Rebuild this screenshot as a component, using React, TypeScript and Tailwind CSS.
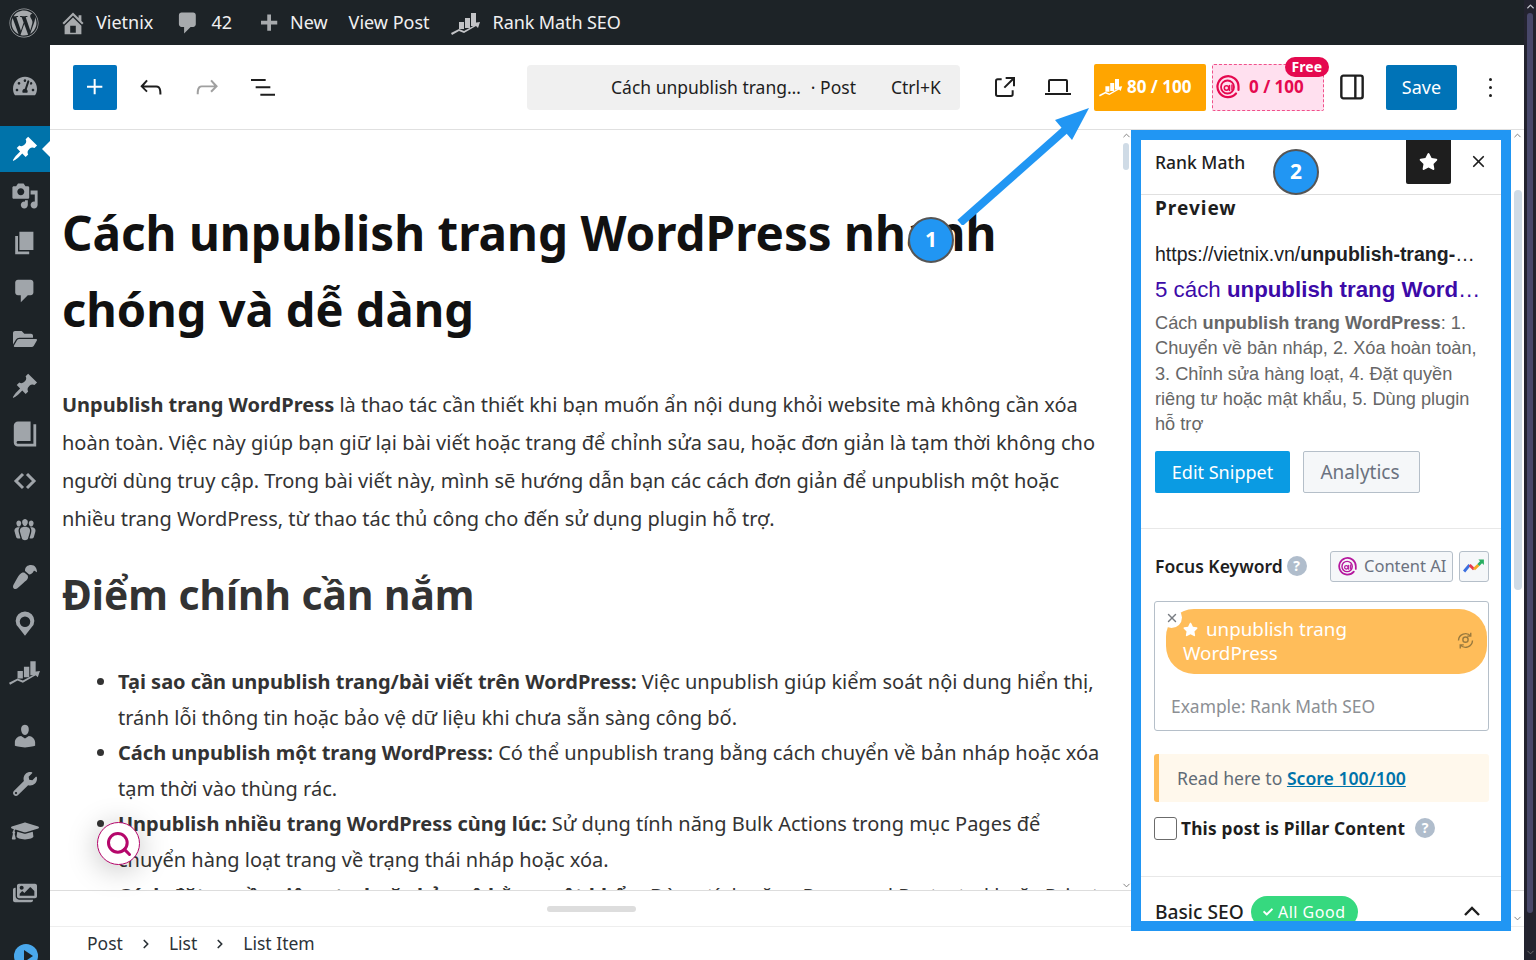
import React from 'react';
import { FaWordpress, FaTachometerAlt, FaFolderOpen, FaPaintBrush, FaWrench, FaGraduationCap, FaImages, FaStar, FaCheck } from 'react-icons/fa';
import { X, ChevronRight, ChevronUp, ChevronDown, Search } from 'lucide-react';

const Dash = ({ d, className = 'w-6 h-6' }: { d: string; className?: string }) => (
  <svg viewBox="0 0 20 20" fill="currentColor" className={className}><path d={d} /></svg>
);
const Wp = ({ d, className = 'w-8 h-8' }: { d: string; className?: string }) => (
  <svg viewBox="0 0 24 24" fill="currentColor" className={className}><path d={d} /></svg>
);

const PIN = 'M10.44 3.02l1.82-1.82 6.36 6.35-1.83 1.82c-1.05-.68-2.48-.57-3.41.36l-.75.75c-.92.93-1.04 2.35-.35 3.41l-1.83 1.82-2.41-2.41-2.8 2.79c-.42.42-3.38 2.71-3.8 2.29s1.86-3.39 2.28-3.81l2.79-2.79L4.1 9.36l1.83-1.82c1.05.69 2.48.57 3.4-.36l.75-.75c.93-.92 1.05-2.35.36-3.41z';
const MEDIA = 'M13 11V4c0-.55-.45-1-1-1h-1.67L9 1H5L3.67 3H2c-.55 0-1 .45-1 1v7c0 .55.45 1 1 1h10c.55 0 1-.45 1-1zM7 4.5c1.38 0 2.5 1.12 2.5 2.5S8.38 9.5 7 9.5 4.5 8.38 4.5 7 5.62 4.5 7 4.5zM14 6h5v10.5c0 1.38-1.12 2.5-2.5 2.5S14 17.88 14 16.5s1.12-2.5 2.5-2.5c.17 0 .34.02.5.05V9h-3V6zm-4 8.05V13h2v3.5c0 1.38-1.12 2.5-2.5 2.5S7 17.88 7 16.5 8.12 14 9.5 14c.17 0 .34.02.5.05z';
const PAGE = 'M6 15V2h10v13H6zm-1 1h8v2H3V5h2v11z';
const COMMENT = 'M5 2h9c1.1 0 2 .9 2 2v7c0 1.1-.9 2-2 2h-2l-5 5v-5H5c-1.1 0-2-.9-2-2V4c0-1.1.9-2 2-2z';
const BOOK = 'M16 3h2v16H5c-1.66 0-3-1.34-3-3V4c0-1.66 1.34-3 3-3h9v14H5c-.55 0-1 .45-1 1s.45 1 1 1h11V3z';
const USER = 'M10 9.25c-2.27 0-2.73-3.44-2.73-3.44C7 4.02 7.82 2 9.97 2c2.16 0 2.98 2.02 2.71 3.81 0 0-.41 3.44-2.68 3.44zm0 2.57L12.72 10c2.39 0 4.52 2.33 4.52 4.53v2.49s-3.65 1.13-7.24 1.13c-3.65 0-7.24-1.13-7.24-1.13v-2.49c0-2.25 1.94-4.48 4.47-4.48z';
const HOME = 'M16 8.5l1.53 1.53-1.06 1.06L10 4.62l-6.47 6.47-1.06-1.06L10 2.5l4 4v-2h2v4zm-6-2.46l6 5.99V18H4v-5.97zM12 17v-5H8v5h4z';
const GROUPS = 'M8.03 4.46c-.29 1.28.55 3.46 1.97 3.46 1.41 0 2.25-2.18 1.96-3.46-.22-.98-1.08-1.63-1.96-1.63-.89 0-1.74.65-1.97 1.63zm-4.13.9c-.25 1.08.47 2.93 1.67 2.93s1.92-1.85 1.67-2.93c-.19-.83-.92-1.39-1.67-1.39s-1.48.56-1.67 1.39zm8.86 0c-.25 1.08.47 2.93 1.66 2.93 1.2 0 1.92-1.85 1.67-2.93-.19-.83-.92-1.39-1.67-1.39-.74 0-1.47.56-1.66 1.39zm-.59 11.43l1.25-4.3C14.2 10 12.71 8.47 10 8.47c-2.72 0-4.21 1.53-3.44 4.02l1.26 4.3C8.05 17.51 9 18 10 18c.98 0 1.94-.49 2.17-1.21zm-6.1-7.63c-.49.67-.96 1.83-.42 3.59l1.12 3.79c-.34.2-.77.31-1.2.31-.85 0-1.65-.41-1.85-1.03l-1.07-3.65c-.65-2.11.61-3.4 2.92-3.4.27 0 .54.02.79.06-.1.1-.2.22-.29.33zm8.35-.39c2.31 0 3.58 1.29 2.92 3.4l-1.07 3.65c-.2.62-1 1.03-1.85 1.03-.43 0-.86-.11-1.2-.31l1.11-3.77c.55-1.78.08-2.94-.42-3.61-.08-.11-.18-.23-.28-.33.25-.04.51-.06.79-.06z';

const RankIcon = ({ className = 'w-7 h-7' }: { className?: string }) => (
  <svg viewBox="0 0 30 24" fill="currentColor" className={className}>
    <path d="M8 11h5v7H8zM14 7h5v10h-5zM20 2h5v13h-5z" />
    <path d="M0 22l8-4 5 2 11-6-2-2 7-1-2 6-2-2-12 7-5-2-7 4z" />
  </svg>
);

const AiIcon = ({ className = 'w-6 h-6', color = '#e5094f' }: { className?: string; color?: string }) => (
  <svg viewBox="0 0 24 24" fill="none" className={className}>
    <path d="M20 18.5a10.5 10.5 0 1 1 2.5-6.500v3" stroke={color} strokeWidth="2.2" strokeLinecap="round" />
    <circle cx="11.500" cy="12" r="6.500" stroke={color} strokeWidth="1.800" />
    <circle cx="10.500" cy="13" r="2.200" stroke={color} strokeWidth="1.500" />
    <path d="M13.500 10.500v5M16 10v5" stroke={color} strokeWidth="1.500" strokeLinecap="round" />
  </svg>
);

const Help = () => (
  <span className="w-5 h-5 rounded-full bg-[#b0bdcc] text-white text-[14px] font-bold flex items-center justify-center leading-none">?</span>
);

const adminIcons = [
  { key: 'media', el: <Dash d={MEDIA} className="w-7 h-7" /> },
  { key: 'page', el: <Dash d={PAGE} className="w-7 h-7" /> },
  { key: 'comment', el: <Dash d={COMMENT} className="w-7 h-7" /> },
  { key: 'folder', el: <FaFolderOpen className="w-6 h-6" /> },
  { key: 'pin', el: <Dash d={PIN} className="w-7 h-7" /> },
  { key: 'book', el: <Dash d={BOOK} className="w-7 h-7" /> },
  {
    key: 'code',
    el: (
      <svg viewBox="0 0 24 24" fill="none" stroke="currentColor" strokeWidth="3" className="w-6 h-6">
        <path d="M10 5l-7 7 7 7M14 5l7 7-7 7" />
      </svg>
    ),
  },
  { key: 'users', el: <Dash d={GROUPS} className="w-7 h-7" /> },
  { key: 'brush', el: <FaPaintBrush className="w-6 h-6 rotate-180" /> },
  {
    key: 'loc',
    el: (
      <svg viewBox="0 0 24 24" fill="none" className="w-7 h-7">
        <path d="M12 22l-5.500-7A8 8 0 1 1 17.500 15z" fill="currentColor" />
        <circle cx="12" cy="10" r="4.500" fill="#1d2327" />
      </svg>
    ),
  },
  { key: 'rank', el: <RankIcon className="w-8 h-7" /> },
];

function AdminSidebar() {
  return (
    <aside className="w-[50px] shrink-0 bg-[#1d2327] text-[#a0a5aa] flex flex-col overflow-hidden">
      <div className="h-[81px] shrink-0 flex items-center justify-center">
        <FaTachometerAlt className="w-6 h-6" />
      </div>
      <div className="relative h-[46px] shrink-0 bg-[#0073aa] text-white flex items-center justify-center">
        <Dash d={PIN} className="w-7 h-7" />
        <span className="absolute right-0 top-[15px] w-0 h-0 border-y-[8px] border-y-transparent border-r-[8px] border-r-white" />
      </div>
      {adminIcons.map((i) => (
        <div key={i.key} className="h-[47.6px] shrink-0 flex items-center justify-center">
          {i.el}
        </div>
      ))}
      <div className="h-[16px] shrink-0" />
      <div className="h-[48px] shrink-0 flex items-center justify-center"><Dash d={USER} className="w-7 h-7" /></div>
      <div className="h-[48px] shrink-0 flex items-center justify-center"><FaWrench className="w-6 h-6" /></div>
      <div className="h-[46px] shrink-0 flex items-center justify-center"><FaGraduationCap className="w-7 h-7" /></div>
      <div className="h-[16px] shrink-0" />
      <div className="h-[46px] shrink-0 flex items-center justify-center"><FaImages className="w-6 h-6" /></div>
      <div className="mt-[28px] ml-[14px] w-[24px] h-[24px] rounded-full bg-[#4aa8ec] shrink-0 flex items-center justify-center">
        <span className="w-0 h-0 ml-1 border-y-[6px] border-y-transparent border-l-[9px] border-l-[#1d2327]" />
      </div>
    </aside>
  );
}

function TopBar() {
  return (
    <header className="h-[45px] shrink-0 bg-[#1d2327] text-[#f0f0f1] text-[18px] flex items-center">
      <FaWordpress className="w-[30px] h-[30px] ml-[9px] text-[#a7aaad]" />
      <Dash d={HOME} className="w-[28px] h-[28px] ml-[20px] text-[#a7aaad]" />
      <span className="ml-[9px]">Vietnix</span>
      <Dash d={COMMENT} className="w-[26px] h-[26px] ml-[22px] text-[#a7aaad]" />
      <span className="ml-[10px]">42</span>
      <Dash d="M17 7v3h-5v5H9v-5H4V7h5V2h3v5h5z" className="ml-[24px] w-[25px] h-[25px] text-[#a7aaad] translate-y-[2px]" />
      <span className="ml-[9px]">New</span>
      <span className="ml-[21px]">View Post</span>
      <RankIcon className="w-[30px] h-[24px] ml-[21px] text-[#c3c4c7]" />
      <span className="ml-[12px] tracking-[-0.1px]">Rank Math SEO</span>
    </header>
  );
}

function EditorToolbar() {
  return (
    <div className="h-[85px] shrink-0 border-b border-[#e0e0e0] flex items-center text-[#1e1e1e]">
      <button className="ml-[23px] w-[44px] h-[45px] rounded-[2px] bg-[#0073bd] text-white flex items-center justify-center">
        <Wp d="M11 12.5V17.5H12.5V12.5H17.5V11H12.5V6H11V11H6V12.5H11Z" className="w-8 h-8" />
      </button>
      <Wp d="M18.3 11.7c-.6-.6-1.4-.9-2.3-.9H6.7l2.9-3.3-1.1-1-4.5 5L8.500 16l1-1-2.700-2.700H16c.5 0 .9.2 1.300.5 1 1 1 3.400 1 4.500v.3h1.500v-.2c0-1.500 0-4.300-1.500-5.700z" className="ml-[18px] w-8 h-8" />
      <Wp d="M15.6 6.5l-1.100 1 2.900 3.300H8c-.9 0-1.700.3-2.300.9-1.400 1.500-1.400 4.200-1.400 5.600v.2h1.500v-.3c0-1.100 0-3.500 1-4.500.3-.3.7-.5 1.300-.5h9.200L14.500 15l1.100 1.100 4.600-4.600-4.600-5z" className="ml-[24px] w-8 h-8 text-[#a0a0a0]" />
      <Wp d="M3 6h11v1.500H3V6Zm3.500 5.500h11V13h-11v-1.500ZM21 17H10v1.500h11V17Z" className="ml-[24px] w-8 h-8" />
      <div className="ml-[248px] w-[433px] h-[45px] rounded-[4px] bg-[#f0f0f0] flex items-center text-[17.5px] pl-[84px]">
        <span>Cách unpublish trang…</span>
        <span className="ml-[10px]">· Post</span>
        <span className="ml-[35px]">Ctrl+K</span>
      </div>
      <Wp d="M19.5 4.500h-7V6h4.440l-5.970 5.970 1.060 1.060L18 7.060v4.440h1.500v-7Zm-13 1a2 2 0 0 0-2 2v10a2 2 0 0 0 2 2h10a2 2 0 0 0 2-2v-3H17v3a.5.5 0 0 1-.5.5h-10a.5.5 0 0 1-.5-.5v-10a.5.5 0 0 1 .5-.5h3V5.500h-3Z" className="ml-[29px] w-8 h-8" />
      <svg viewBox="0 0 28 20" fill="none" stroke="currentColor" strokeWidth="2" className="ml-[23px] w-[28px] h-[20px]">
        <path d="M5 15V4a1 1 0 0 1 1-1h16a1 1 0 0 1 1 1v11M1 17h26" />
      </svg>
      <div className="ml-[22px] w-[112px] h-[47px] rounded-[2px] bg-[#ffa500] text-white font-bold text-[17px] flex items-center pl-[5px]">
        <RankIcon className="w-[24px] h-[20px]" />
        <span className="ml-[4px]">80 / 100</span>
      </div>
      <div className="relative ml-[6px] w-[112px] h-[47px] rounded-[2px] bg-[#ffe0ef] border border-dashed border-[#f0508a] text-[#e5094f] font-bold text-[17px] flex items-center pl-[3px]">
        <AiIcon />
        <span className="ml-[9px]">0 / 100</span>
        <span className="absolute -right-[6px] -top-[8px] bg-[#e5094f] text-white text-[14px] font-bold leading-none px-[7px] py-[3px] rounded-full">Free</span>
      </div>
      <svg viewBox="0 0 24 24" fill="none" stroke="currentColor" strokeWidth="1.8" className="ml-[12px] w-8 h-8">
        <rect x="4" y="3.5" width="16" height="17" rx="1.5" /><path d="M14.5 3.5v17" />
      </svg>
      <button className="ml-[18px] w-[71px] h-[45px] rounded-[2px] bg-[#0073b7] text-white text-[18px]">Save</button>
      <div className="ml-[32px] flex flex-col gap-[5px]">
        <span className="w-[3px] h-[3px] rounded-full bg-[#1e1e1e]" />
        <span className="w-[3px] h-[3px] rounded-full bg-[#1e1e1e]" />
        <span className="w-[3px] h-[3px] rounded-full bg-[#1e1e1e]" />
      </div>
    </div>
  );
}

const intro = [
  'là thao tác cần thiết khi bạn muốn ẩn nội dung khỏi website mà không cần xóa',
  'hoàn toàn. Việc này giúp bạn giữ lại bài viết hoặc trang để chỉnh sửa sau, hoặc đơn giản là tạm thời không cho',
  'người dùng truy cập. Trong bài viết này, mình sẽ hướng dẫn bạn các cách đơn giản để unpublish một hoặc',
  'nhiều trang WordPress, từ thao tác thủ công cho đến sử dụng plugin hỗ trợ.',
];

const points = [
  { b: 'Tại sao cần unpublish trang/bài viết trên WordPress:', t: 'Việc unpublish giúp kiểm soát nội dung hiển thị,', next: 'tránh lỗi thông tin hoặc bảo vệ dữ liệu khi chưa sẵn sàng công bố.' },
  { b: 'Cách unpublish một trang WordPress:', t: 'Có thể unpublish trang bằng cách chuyển về bản nháp hoặc xóa', next: 'tạm thời vào thùng rác.' },
  { b: 'Unpublish nhiều trang WordPress cùng lúc:', t: 'Sử dụng tính năng Bulk Actions trong mục Pages để', next: 'chuyển hàng loạt trang về trạng thái nháp hoặc xóa.' },
  { b: 'Cách đặt quyền riêng tư hoặc bảo vệ bằng mật khẩu:', t: 'Dùng tính năng Password Protected hoặc Private', next: '' },
];

function Canvas() {
  return (
    <main className="flex-1 min-h-0 overflow-hidden pl-[12px] pt-[64px] text-[#333] relative">
      <h1 className="text-[47.6px] leading-[77px] font-bold text-[#111] whitespace-nowrap">
        <span className="block">Cách unpublish trang WordPress nhanh</span>
        <span className="block text-[47px]">chóng và dễ dàng</span>
      </h1>
      <div className="mt-[38px] text-[20px] leading-[38px] whitespace-nowrap">
        {intro.map((l, i) => (
          <span key={i} className="block">
            {i === 0 && <b>Unpublish trang WordPress </b>}
            {l}
          </span>
        ))}
      </div>
      <h2 className="mt-[26px] text-[40.7px] leading-[60px] font-bold">Điểm chính cần nắm</h2>
      <ul className="mt-[40px] ml-[56px] text-[20px] leading-[35.6px] whitespace-nowrap list-disc">
        {points.map((p) => (
          <li key={p.b}>
            <b>{p.b}</b> {p.t}
            {p.next && <span className="block">{p.next}</span>}
          </li>
        ))}
      </ul>
    </main>
  );
}

function RankPanel() {
  return (
    <aside className="w-[380px] border-[10px] border-[#2196f3] bg-white overflow-hidden text-[#1e1e1e]">
      <div className="h-[55px] border-b border-[#e0e0e0] relative flex items-center pl-[14px] pb-[10px]">
        <span className="text-[17.5px] font-medium">Rank Math</span>
        <span className="absolute left-[265px] -top-[2px] w-[45px] h-[46px] rounded-[2px] bg-[#1e1e1e] text-white flex items-center justify-center">
          <FaStar className="w-[19px] h-[19px]" />
        </span>
        <X className="absolute right-[13px] top-[12px] w-[19px] h-[19px]" strokeWidth={2.2} />
      </div>
      <div className="px-[14px]">
        <div className="text-[19px] font-bold tracking-[1px] leading-[26px]">Preview</div>
        <div className="mt-[21px] text-[19.5px] leading-[24px] truncate font-['Liberation_Sans',sans-serif] text-[#202124]">
          https://vietnix.vn/<b>unpublish-trang-</b>…
        </div>
        <div className="mt-[10px] text-[22.3px] leading-[28px] truncate font-['Liberation_Sans',sans-serif] text-[#3c0aa8]">
          5 cách <b>unpublish trang Word</b>…
        </div>
        <div className="mt-[7px] text-[18.2px] leading-[25.3px] whitespace-nowrap font-['Liberation_Sans',sans-serif] text-[#666]">
          <span className="block">Cách <b>unpublish trang WordPress</b>: 1.</span>
          <span className="block">Chuyển về bản nháp, 2. Xóa hoàn toàn,</span>
          <span className="block">3. Chỉnh sửa hàng loạt, 4. Đặt quyền</span>
          <span className="block">riêng tư hoặc mật khẩu, 5. Dùng plugin</span>
          <span className="block">hỗ trợ</span>
        </div>
        <div className="mt-[14px] flex gap-[13px]">
          <button className="w-[135px] h-[42px] rounded-[2px] bg-[#0a9be3] text-white text-[18px]">Edit Snippet</button>
          <button className="w-[117px] h-[42px] pr-[3px] rounded-[2px] border border-[#b5bfc9] bg-[#f5f7f9] text-[#6b7280] text-[19px]">Analytics</button>
        </div>
      </div>
      <div className="mt-[35px] border-t border-[#e8e8e8] pl-[14px] pr-[12px] pt-[21px]">
        <div className="flex items-center h-[32px]">
          <span className="text-[17.5px] font-semibold">Focus Keyword</span>
          <span className="ml-[4px]"><Help /></span>
          <span className="ml-auto w-[123px] h-[31px] rounded-[3px] border border-[#b5bfc9] bg-[#f5f7f9] text-[#6b7280] text-[16.5px] flex items-center pl-[7px]">
            <AiIcon className="w-[19px] h-[19px] mr-[7px]" color="#b5179e" />Content AI
          </span>
          <span className="ml-[6px] w-[30px] h-[31px] rounded-[3px] border border-[#b5bfc9] bg-[#f5f7f9] flex items-center justify-center">
            <svg viewBox="0 0 20 14" fill="none" strokeWidth="2.600" className="w-[22px] h-[16px]">
              <path d="M1 12l5-6" stroke="#3b6fe0" />
              <path d="M6 6l4 4" stroke="#e5394f" />
              <path d="M10 10l4-4" stroke="#f5a623" />
              <path d="M14 6l3-3" stroke="#27ae60" />
              <path d="M14 1h5v5z" fill="#27ae60" />
            </svg>
          </span>
        </div>
        <div className="relative mt-[19px] -ml-[1px] h-[130px] rounded-[3px] border border-[#b5bfc9]">
          <div className="absolute left-[11px] top-[7px] w-[321px] h-[65px] rounded-[28px] bg-[#ffbd5a] text-white text-[18.8px] leading-[24px] pl-[17px] pt-[8px]">
            <FaStar className="inline w-[15px] h-[15px] mr-[8px] -mt-1" />unpublish trang
            <br />WordPress
            <svg viewBox="0 0 24 24" fill="none" stroke="#9a7a3e" strokeWidth="1.6" className="absolute right-[11px] top-[21px] w-[21px] h-[21px]">
              <path d="M4 12a8 8 0 0 1 14-5M20 12a8 8 0 0 1-14 5M18 3v4h-4M6 21v-4h4" />
              <circle cx="12" cy="11" r="3" />
            </svg>
          </div>
          <span className="absolute left-[6px] top-[5px] w-[21px] h-[21px] rounded-full bg-white text-[#787c82] flex items-center justify-center">
            <X className="w-[14px] h-[14px]" strokeWidth={2.4} />
          </span>
          <span className="absolute left-[16px] top-[92px] text-[#8c8f94] text-[17.4px] leading-[24px]">Example: Rank Math SEO</span>
        </div>
        <div className="mt-[23px] -ml-[1px] h-[48px] rounded-[3px] border-l-[5px] border-[#ffbd5a] bg-[#fff8ec] pl-[18px] flex items-center text-[17.6px] text-[#5f6b76]">
          Read here to&nbsp;<a className="text-[#0073aa] underline font-semibold">Score 100/100</a>
        </div>
        <div className="mt-[14px] -ml-[1px] flex items-center h-[24px]">
          <span className="w-[23px] h-[23px] rounded-[3px] border border-[#6b6b6b] bg-white" />
          <span className="ml-[4px] text-[17.3px] font-bold tracking-[0.2px]">This post is Pillar Content</span>
          <span className="ml-[10px]"><Help /></span>
        </div>
      </div>
      <div className="mt-[36px] border-t border-[#e8e8e8] px-[14px] pt-[19px] flex items-start relative">
        <span className="text-[19.2px] leading-[26px] font-medium mt-[3px]">Basic SEO</span>
        <span className="ml-[7px] w-[107px] h-[32px] rounded-full bg-[#36d97f] text-white text-[16px] flex items-center justify-center gap-[5px] tracking-[0.5px]">
          <FaCheck className="w-[10px] h-[10px]" />All Good
        </span>
        <svg viewBox="0 0 16 10" fill="none" stroke="#1e1e1e" strokeWidth="2.4" className="absolute right-[21px] top-[29px] w-[16px] h-[10px]">
          <path d="M1 9l7-7 7 7" />
        </svg>
      </div>
    </aside>
  );
}

const Annotation = ({ n, className }: { n: number; className: string }) => (
  <span className={`absolute z-20 w-[46px] h-[46px] rounded-full bg-[#2196f3] border-2 border-[#555] text-white font-bold text-[21px] flex items-center justify-center ${className}`}>
    {n}
  </span>
);

export default function App() {
  return (
    <div className="relative w-[1536px] h-[960px] overflow-hidden bg-white flex font-['Noto_Sans',sans-serif]">
      <div className="w-[1524px] shrink-0 flex flex-col">
        <TopBar />
        <div className="flex-1 min-h-0 flex">
          <AdminSidebar />
          <div className="flex-1 min-w-0 flex flex-col">
            <EditorToolbar />
            <div className="h-[760px] shrink-0 flex relative">
              <div className="w-[1081px] shrink-0 flex flex-col h-[760px]">
                <Canvas />
              </div>
            </div>
            <div className="h-[36px] shrink-0 border-t border-[#ddd] flex items-start justify-start">
              <span className="ml-[497px] mt-[15px] w-[89px] h-[6px] rounded-full bg-[#ddd]" />
            </div>
            <div className="flex-1 border-t border-[#eee] flex items-center pl-[37px] gap-[16px] text-[17.5px] text-[#2c3338]">
              <span>Post</span><ChevronRight className="w-[14px] h-[14px]" strokeWidth={3} />
              <span>List</span><ChevronRight className="w-[14px] h-[14px]" strokeWidth={3} />
              <span>List Item</span>
            </div>
          </div>
        </div>
      </div>
      <div className="w-[12px] shrink-0 bg-[#23232f] flex flex-col items-center">
        <ChevronUp className="w-[11px] h-[11px] text-[#c8c8d0] mt-[1px] shrink-0" strokeWidth={3} />
        <span className="w-[6px] h-[900px] mt-[1px] bg-[#48486a] rounded-full shrink-0" />
        <ChevronDown className="w-[11px] h-[11px] text-[#777] mt-[34px] shrink-0" />
      </div>

      {/* panel over the editor */}
      <div className="absolute left-[1131px] top-[130px] h-[801px] flex">
        <RankPanel />
      </div>
      {/* scrollbars */}
      <div className="absolute left-[1123px] top-[143px] w-[6px] h-[27px] rounded-full bg-[#cfdbe6]" />
      <ChevronUp className="absolute left-[1121px] top-[130px] w-[11px] h-[11px] text-[#777]" />
      <ChevronDown className="absolute left-[1121px] top-[880px] w-[11px] h-[11px] text-[#777]" />
      <div className="absolute left-[1514px] top-[190px] w-[8px] h-[400px] rounded-full bg-[#cfdbe6]" />
      <ChevronUp className="absolute left-[1512px] top-[130px] w-[11px] h-[11px] text-[#777]" />
      <ChevronDown className="absolute left-[1512px] top-[913px] w-[11px] h-[11px] text-[#777]" />

      {/* annotations */}
      <svg viewBox="0 0 140 120" className="absolute z-10 left-[955px] top-[105px] w-[140px] h-[120px]">
        <path d="M5 118L110 25" stroke="#2196f3" strokeWidth="8" />
        <path d="M134 3L117 35 100 15z" fill="#2196f3" />
      </svg>
      <Annotation n={1} className="left-[908px] top-[217px]" />
      <Annotation n={2} className="left-[1273px] top-[149px]" />

      {/* floating search */}
      <div className="absolute z-10 left-[97px] top-[822px] w-[43px] h-[43px] rounded-full bg-white border border-[#b5076b] shadow-[0_4px_30px_rgba(0,0,0,0.25)] flex items-center justify-center">
        <Search className="w-[28px] h-[28px] text-[#b5076b]" strokeWidth={2.6} />
      </div>
    </div>
  );
}
